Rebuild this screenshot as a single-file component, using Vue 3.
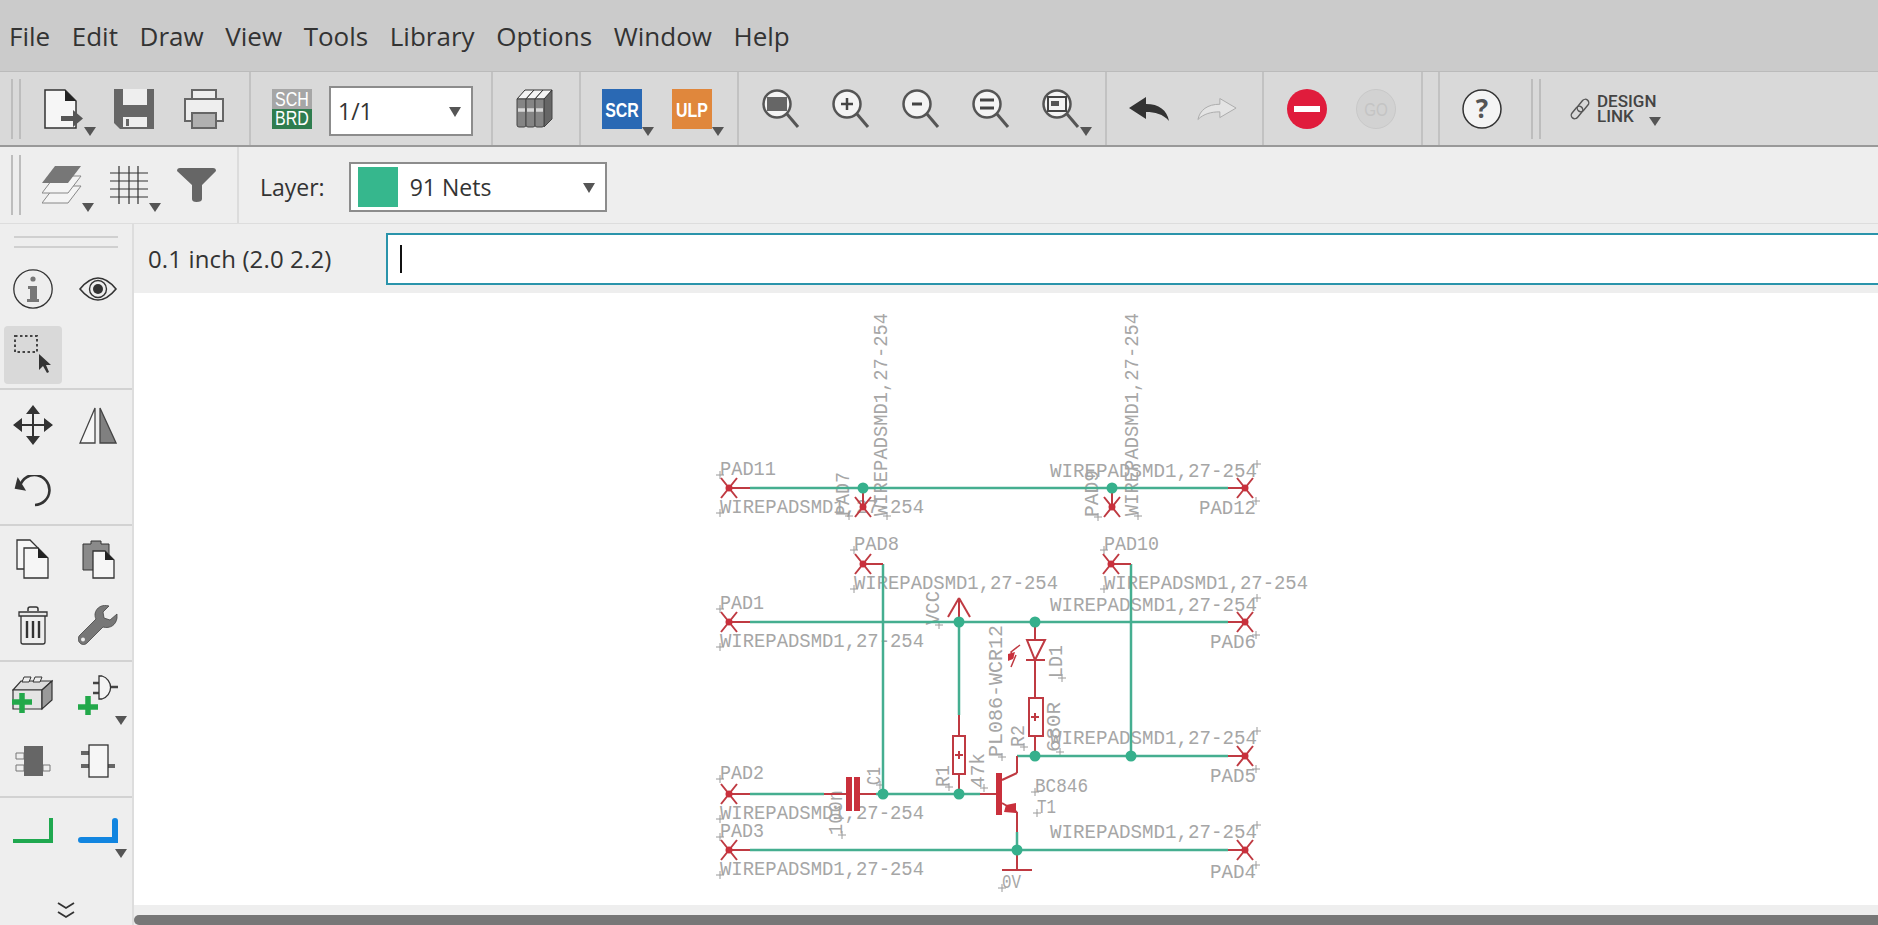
<script setup>
const menus = ['File', 'Edit', 'Draw', 'View', 'Tools', 'Library', 'Options', 'Window', 'Help'];

const wire = 'WIREPADSMD1,27-254';
const labels = [
  { t: 'PAD11', x: 720, y: 475, w: 56 },
  { t: wire, x: 720, y: 513, w: 204 },
  { t: wire, x: 887, y: 516, w: 203, rot: true },
  { t: 'PAD7', x: 849, y: 516, w: 44, rot: true },
  { t: wire, x: 1138, y: 516, w: 203, rot: true },
  { t: 'PAD9', x: 1098, y: 517, w: 47, rot: true },
  { t: wire, x: 1050, y: 477, w: 207, end: true },
  { t: 'PAD12', x: 1199, y: 514, w: 57, end: true },
  { t: 'PAD8', x: 854, y: 550, w: 45 },
  { t: wire, x: 854, y: 589, w: 204 },
  { t: 'PAD10', x: 1104, y: 550, w: 55 },
  { t: wire, x: 1104, y: 589, w: 204 },
  { t: 'PAD1', x: 720, y: 609, w: 44 },
  { t: wire, x: 1050, y: 611, w: 207, end: true },
  { t: wire, x: 720, y: 647, w: 204 },
  { t: 'PAD6', x: 1210, y: 648, w: 46, end: true },
  { t: 'VCC', x: 939, y: 625, w: 34, rot: true },
  { t: 'PL086-WCR12', x: 1002, y: 757, w: 132, rot: true },
  { t: 'LD1', x: 1062, y: 678, w: 33, rot: true },
  { t: 'R2', x: 1024, y: 747, w: 22, rot: true },
  { t: '680R', x: 1060, y: 752, w: 50, rot: true },
  { t: wire, x: 1050, y: 744, w: 207, end: true },
  { t: 'PAD5', x: 1210, y: 782, w: 46, end: true },
  { t: 'R1', x: 949, y: 787, w: 22, rot: true },
  { t: '47k', x: 984, y: 788, w: 35, rot: true },
  { t: 'BC846', x: 1035, y: 792, w: 53 },
  { t: 'T1', x: 1037, y: 813, w: 19 },
  { t: 'PAD2', x: 720, y: 779, w: 44 },
  { t: wire, x: 720, y: 819, w: 204 },
  { t: 'PAD3', x: 720, y: 837, w: 44 },
  { t: '100n', x: 842, y: 835, w: 45, rot: true },
  { t: 'C1', x: 880, y: 785, w: 18, rot: true },
  { t: wire, x: 1050, y: 838, w: 207, end: true },
  { t: 'PAD4', x: 1210, y: 878, w: 46, end: true },
  { t: wire, x: 720, y: 875, w: 204 },
  { t: '0V', x: 1002, y: 888, w: 19 },
];

const crossOf = (l) => (l.end ? { x: l.x + l.w, y: l.y - 13 } : { x: l.x, y: l.y });

const greens = [
  [750, 488, 1228, 488], [750, 622, 1228, 622], [1017, 756, 1228, 756], [750, 794, 824, 794],
  [876, 794, 980, 794], [750, 850, 1228, 850], [883, 564, 883, 794], [1131, 564, 1131, 756],
  [959, 622, 959, 715], [1017, 832, 1017, 850],
];
const reds = [
  [729, 488, 750, 488], [1228, 488, 1245, 488], [863, 488, 863, 507], [1112, 488, 1112, 507],
  [863, 564, 883, 564], [1111, 564, 1131, 564], [729, 622, 750, 622], [1228, 622, 1245, 622],
  [1228, 756, 1245, 756], [729, 794, 750, 794], [729, 850, 750, 850], [1228, 850, 1245, 850],
  [824, 794, 846, 794], [860, 794, 876, 794], [980, 794, 996, 794], [959, 715, 959, 736],
  [959, 774, 959, 794], [1035, 622, 1035, 640], [1035, 660, 1035, 698], [1035, 736, 1035, 756],
  [1017, 756, 1017, 773], [1017, 773, 1002, 780], [1002, 803, 1017, 812], [1017, 812, 1017, 832],
  [1017, 850, 1017, 870], [1002, 870, 1032, 870], [1026, 660, 1045, 660], [959, 622, 959, 598],
  [959, 598, 948, 617], [959, 598, 970, 617], [955, 755, 963, 755], [959, 751, 959, 759],
  [1031, 717, 1039, 717], [1035, 713, 1035, 721],
];
const pads = [
  [729, 488], [1245, 488], [863, 507], [1112, 507], [863, 564], [1111, 564],
  [729, 622], [1245, 622], [1245, 756], [729, 794], [729, 850], [1245, 850],
];
const dots = [
  [863, 488], [1112, 488], [959, 622], [1035, 622], [1035, 756], [1131, 756],
  [883, 794], [959, 794], [1017, 850],
];
</script>

<template>
  <div class="app">
    <nav class="menubar">
      <span v-for="m in menus" :key="m" class="menu">{{ m }}</span>
    </nav>

    <div class="toolbar main-bar">
      <div class="group g0">
        <i class="grip"></i>
        <div class="tool first">
          <svg width="40" height="40" viewBox="0 0 40 40"><path d="M1 1H21L32 12V39H1Z" fill="#f6f6f6" stroke="#333" stroke-width="1.5"/><path d="M21 1L32 12H21Z" fill="#222"/><path d="M17 27H29V21L39 29.5 29 38V32H17Z" fill="#555"/></svg>
          <b class="caret"></b>
        </div>
        <div class="tool">
          <svg width="40" height="40" viewBox="0 0 40 40"><path d="M0 0H40V40H6L0 34Z" fill="#666"/><path d="M9 0H33V16H9Z" fill="#eee"/><path d="M9 28H33V38H9Z" fill="#eee"/><path d="M12 30H15V37H12Z" fill="#666"/></svg>
        </div>
        <div class="tool">
          <svg width="40" height="40" viewBox="0 0 40 40"><rect x="8" y="1" width="24" height="14" fill="#eee" stroke="#666" stroke-width="2"/><rect x="1" y="10" width="38" height="22" fill="#eee" stroke="#666" stroke-width="2"/><rect x="8" y="24" width="24" height="15" fill="#b0b0b0" stroke="#666" stroke-width="2"/></svg>
        </div>
      </div>

      <div class="group g1">
        <div class="tool">
          <svg width="40" height="40" viewBox="0 0 40 40"><rect width="40" height="20" fill="#a6a6a6"/><rect y="20" width="40" height="20" fill="#2f7d4f"/><text transform="translate(20 16.500) scale(.8 1)" text-anchor="middle" class="badge-text">SCH</text><text transform="translate(20 35.800) scale(.8 1)" text-anchor="middle" class="badge-text">BRD</text></svg>
        </div>
        <div class="combo sheet">
          <span>1/1</span>
          <b class="arrow"></b>
        </div>
      </div>

      <div class="group g2">
        <div class="tool">
          <svg width="40" height="40" viewBox="0 0 40 40"><path d="M28 10L36 1V30L28 38Z" fill="#666" stroke="#444"/><g fill="#f4f4f4" stroke="#333" stroke-width="1"><path d="M1 10L9 1H18L10 10Z"/><path d="M10 10L18 1H27L19 10Z"/><path d="M19 10L27 1H36L28 10Z"/></g><g fill="#858585" stroke="#444" stroke-width="1"><path d="M1 10H10V36Q10 38 8 38H3Q1 38 1 36Z"/><path d="M10 10H19V36Q19 38 17 38H12Q10 38 10 36Z"/><path d="M19 10H28V36Q28 38 26 38H21Q19 38 19 36Z"/></g><path d="M2 21H9M11 21H18M20 21H27" stroke="#d8d8d8" stroke-width="3.500"/></svg>
        </div>
      </div>

      <div class="group g3">
        <div class="tool">
          <svg width="40" height="40" viewBox="0 0 40 40"><rect width="40" height="40" fill="#2a69b4"/><text transform="translate(20 28) scale(.76 1)" text-anchor="middle" class="script-text">SCR</text></svg>
          <b class="caret"></b>
        </div>
        <div class="tool">
          <svg width="40" height="40" viewBox="0 0 40 40"><rect width="40" height="40" fill="#e0873c"/><text transform="translate(20 28) scale(.76 1)" text-anchor="middle" class="script-text">ULP</text></svg>
          <b class="caret"></b>
        </div>
      </div>

      <div class="group g4">
        <div class="tool">
          <svg width="40" height="40" viewBox="0 0 40 40"><circle cx="15" cy="15" r="13.500" fill="#f4f4f4" stroke="#555" stroke-width="2.500"/><path d="M25 25L36 38" stroke="#555" stroke-width="3"/><rect x="5" y="8" width="20" height="14" fill="#666"/></svg>
        </div>
        <div class="tool">
          <svg width="40" height="40" viewBox="0 0 40 40"><circle cx="15" cy="15" r="13.500" fill="#f4f4f4" stroke="#555" stroke-width="2.500"/><path d="M25 25L36 38" stroke="#555" stroke-width="3"/><path d="M9 15H21M15 9V21" stroke="#444" stroke-width="2.500"/></svg>
        </div>
        <div class="tool">
          <svg width="40" height="40" viewBox="0 0 40 40"><circle cx="15" cy="15" r="13.500" fill="#f4f4f4" stroke="#555" stroke-width="2.500"/><path d="M25 25L36 38" stroke="#555" stroke-width="3"/><path d="M10 15H20" stroke="#444" stroke-width="3"/></svg>
        </div>
        <div class="tool">
          <svg width="40" height="40" viewBox="0 0 40 40"><circle cx="15" cy="15" r="13.500" fill="#f4f4f4" stroke="#555" stroke-width="2.500"/><path d="M25 25L36 38" stroke="#555" stroke-width="3"/><path d="M8 11H22M8 19H22" stroke="#444" stroke-width="3"/></svg>
        </div>
        <div class="tool">
          <svg width="40" height="40" viewBox="0 0 40 40"><circle cx="15" cy="15" r="13.500" fill="#f4f4f4" stroke="#555" stroke-width="2.500"/><path d="M25 25L36 38" stroke="#555" stroke-width="3"/><rect x="6" y="8" width="18" height="14" fill="none" stroke="#444" stroke-width="2"/><rect x="9" y="12" width="8" height="5" fill="#555"/></svg>
          <b class="caret zoom-caret"></b>
        </div>
      </div>

      <div class="group g5">
        <div class="tool">
          <svg width="40" height="24" viewBox="0 0 40 24"><path d="M0 11L17 0V7C30 7 38 13 40 24 34 17 26 15 17 15V22Z" fill="#333"/></svg>
        </div>
        <div class="tool">
          <svg width="42" height="24" viewBox="0 0 42 24"><path d="M41 11L24 1V7C11 7 3 13 1 23 7 17 15 15 24 15V21Z" fill="#e4e4e4" stroke="#aaa"/></svg>
        </div>
      </div>

      <div class="group g6">
        <div class="tool">
          <svg width="40" height="40" viewBox="0 0 40 40"><circle cx="20" cy="20" r="20" fill="#e01c3c"/><rect x="7" y="17" width="26" height="6" fill="#fff"/></svg>
        </div>
        <div class="tool">
          <svg width="40" height="40" viewBox="0 0 40 40"><circle cx="20" cy="20" r="19.500" fill="#d2d2d2" stroke="#c8c8c8"/><text transform="translate(20 27) scale(.8 1)" text-anchor="middle" class="go-text">GO</text></svg>
        </div>
      </div>

      <div class="group g7"></div>

      <div class="group g8">
        <div class="tool">
          <svg width="40" height="40" viewBox="0 0 40 40"><circle cx="20" cy="20" r="19" fill="#f4f4f4" stroke="#333" stroke-width="1.500"/><text x="20" y="29" text-anchor="middle" class="help-text">?</text></svg>
        </div>
        <i class="grip after-help"></i>
        <div class="design-link">
          <svg width="22" height="22" viewBox="0 0 22 22"><g fill="none" stroke="#555" stroke-width="1.400"><rect x="10.500" y="0.500" width="7" height="14" rx="3.500" transform="rotate(40 14 7.500)"/><rect x="4.500" y="7.500" width="7" height="14" rx="3.500" transform="rotate(40 8 14.500)"/></g></svg>
          <div class="link-text"><span>DESIGN</span><span>LINK</span></div>
          <b class="caret link-caret"></b>
        </div>
      </div>
    </div>

    <div class="toolbar layer-bar">
      <div class="layer-tools">
        <i class="grip"></i>
        <div class="tool first">
          <svg width="40" height="38" viewBox="0 0 40 38"><path d="M13 20H39L26 37H0Z" fill="#f4f4f4" stroke="#888"/><path d="M13 10H39L26 27H0Z" fill="#f4f4f4" stroke="#888"/><path d="M13 0H39L26 17H0Z" fill="#777"/></svg>
          <b class="caret"></b>
        </div>
        <div class="tool">
          <svg width="38" height="38" viewBox="0 0 38 38"><path d="M9 0V38M19 0V38M28 0V38M0 7H38M0 15H38M0 23H38M0 31H38" stroke="#333" stroke-width="1.200"/></svg>
          <b class="caret"></b>
        </div>
        <div class="tool">
          <svg width="39" height="34" viewBox="0 0 39 34"><path d="M0 3Q0 0 3 0H36Q39 0 39 3L25 17V31Q25 34 19.500 34 15 34 15 31V17Z" fill="#666"/></svg>
        </div>
      </div>
      <span class="layer-label">Layer:</span>
      <div class="combo layer-combo">
        <i class="swatch"></i>
        <span>91 Nets</span>
        <b class="arrow"></b>
      </div>
    </div>

    <div class="workspace">
      <aside class="side">
        <section class="side-sec top-sec">
          <i class="side-grip"></i>
          <div class="cells">
            <div class="cell"><svg width="40" height="40" viewBox="0 0 40 40"><circle cx="20" cy="20" r="19.200" fill="none" stroke="#333" stroke-width="1.300"/><circle cx="20" cy="10" r="2.600" fill="#777"/><path d="M15 17H24V30H26V33H14V30H17V20H15Z" fill="#777"/></svg></div>
            <div class="cell"><svg width="38" height="28" viewBox="0 0 38 28"><path d="M1 14Q19 -8 37 14 19 36 1 14Z" fill="none" stroke="#333" stroke-width="1.600"/><circle cx="19" cy="14" r="8.500" fill="none" stroke="#333" stroke-width="1.400"/><circle cx="19" cy="14" r="5" fill="#333"/></svg></div>
            <div class="cell">
              <div class="tile"><svg width="58" height="58" viewBox="0 0 58 58"><rect x="11" y="10" width="22" height="16" fill="none" stroke="#444" stroke-width="2" stroke-dasharray="2.500 2.500"/><path d="M35 28V44L39 40 43 47 45 46 42 39H47Z" fill="#333"/></svg></div>
            </div>
          </div>
        </section>
        <section class="side-sec pad-top">
          <div class="cells">
            <div class="cell"><svg width="40" height="40" viewBox="0 0 40 40"><path d="M20 5V35M5 20H35" stroke="#333" stroke-width="2"/><path d="M20 0L27 9H13ZM20 40L27 31H13ZM0 20L9 13V27ZM40 20L31 13V27Z" fill="#333"/></svg></div>
            <div class="cell"><svg width="38" height="38" viewBox="0 0 38 38"><path d="M16 2V37H1Z" fill="#f6f6f6" stroke="#444" stroke-width="1.300"/><path d="M21 2V37H37Z" fill="#808080" stroke="#444" stroke-width="1.300"/></svg></div>
            <div class="cell"><svg width="37" height="32" viewBox="0 0 37 32"><path d="M6 11A15 15 0 1 1 21 30" fill="none" stroke="#333" stroke-width="2.600"/><path d="M0 13L11 17 5 2Z" fill="#333" transform="rotate(-10 5 10)"/></svg></div>
          </div>
        </section>
        <section class="side-sec pad-bottom">
          <div class="cells">
            <div class="cell"><svg width="33" height="40" viewBox="0 0 33 40"><path d="M1 1H14L22 9V30H1Z" fill="#f6f6f6" stroke="#333" stroke-width="1.300"/><path d="M8 9H22L32 19V39H8Z" fill="#f6f6f6" stroke="#333" stroke-width="1.300"/><path d="M22 9L32 19H22Z" fill="#222"/></svg></div>
            <div class="cell"><svg width="33" height="40" viewBox="0 0 33 40"><path d="M1 5H9V2H19V5H27V31H1Z" fill="#8a8a8a" stroke="#333" stroke-width="1"/><path d="M11 12H23L32 21V39H11Z" fill="#f6f6f6" stroke="#333" stroke-width="1.300"/><path d="M23 12L32 21H23Z" fill="#222"/></svg></div>
            <div class="cell"><svg width="30" height="39" viewBox="0 0 30 39"><path d="M10 5V3Q10 1 12 1H18Q20 1 20 3V5" fill="none" stroke="#333" stroke-width="1.500"/><path d="M1 6H29V10H1Z" fill="#e8e8e8" stroke="#333" stroke-width="1.300"/><path d="M3 10V36Q3 38 5 38H25Q27 38 27 36V10" fill="none" stroke="#333" stroke-width="1.300"/><path d="M9 15V32M15 15V32M21 15V32" stroke="#333" stroke-width="2.400"/></svg></div>
            <div class="cell"><svg width="40" height="40" viewBox="0 0 40 40"><path d="M39 9L32 15 26 13 25 7 31 1C25 -1 18 2 17 9 17 11 17 12 18 14L2 30C-1 33 0 36 2 38 4 40 7 40 9 38L25 22C32 24 38 20 39 13Z" fill="#777" stroke="#444" stroke-width=".8"/><circle cx="5" cy="34.500" r="2" fill="#eee"/></svg></div>
          </div>
        </section>
        <section class="side-sec pad-bottom">
          <div class="cells">
            <div class="cell"><svg width="41" height="38" viewBox="0 0 41 38"><path d="M1 14L9 5H40L30 14Z" fill="#dcdcdc" stroke="#333" stroke-width="1.200"/><path d="M1 14H30V33H1Z" fill="#e4e4e4" stroke="#333" stroke-width="1.200"/><path d="M30 14L40 5V24L30 33Z" fill="#9a9a9a" stroke="#333" stroke-width="1.200"/><path d="M10 6L12 1H19L17 6ZM21 6L23 1H30L28 6Z" fill="#eee" stroke="#333"/><path d="M0 26H20M10 17V37" stroke="#22a84a" stroke-width="5.500"/></svg></div>
            <div class="cell cell-shift"><svg width="40" height="40" viewBox="0 0 40 40"><path d="M15 8H21M15 18H21M32 12H40" stroke="#444" stroke-width="2.400"/><path d="M21 1H24A12 12 0 0 1 24 24H21Z" fill="#f4f4f4" stroke="#333" stroke-width="1.300"/><path d="M0 32H20M10 21V40" stroke="#22a84a" stroke-width="5.500"/></svg><b class="caret side-caret"></b></div>
            <div class="cell"><svg width="36" height="32" viewBox="0 0 36 32"><path d="M1 8H9V14H1ZM1 20H9V26H1ZM28 20H35V26H28Z" fill="#eee" stroke="#777"/><rect x="9" y="1" width="19" height="30" fill="#666"/></svg></div>
            <div class="cell"><svg width="34" height="34" viewBox="0 0 34 34"><path d="M0 9H8M0 22H8M27 22H34" stroke="#666" stroke-width="4"/><rect x="8" y="1" width="19" height="32" fill="#f6f6f6" stroke="#333" stroke-width="1.300"/></svg></div>
          </div>
        </section>
        <section class="side-sec wires">
          <div class="cells">
            <div class="cell"><svg width="40" height="26" viewBox="0 0 40 26"><path d="M0 23H38V0" fill="none" stroke="#1fa84f" stroke-width="4"/></svg></div>
            <div class="cell cell-shift"><svg width="40" height="26" viewBox="0 0 40 26"><path d="M3 22H37V3" fill="none" stroke="#1185e0" stroke-width="6" stroke-linecap="round"/></svg><b class="caret side-caret wire-caret"></b></div>
          </div>
        </section>
        <div class="more"><svg width="18" height="17" viewBox="0 0 18 17"><path d="M1 1L9 6 17 1M1 10L9 15 17 10" fill="none" stroke="#333" stroke-width="1.800"/></svg></div>
      </aside>

      <div class="editor">
        <div class="command">
          <span class="hint">0.1 inch (2.0 2.2)</span>
          <div class="cmd-input"><i class="text-caret"></i></div>
        </div>
        <div class="canvas">
          <svg class="schematic" viewBox="134 293 1744 612" width="1744" height="612">
            <g v-for="(l, i) in labels" :key="i">
              <text
                class="sch-text"
                :x="l.x"
                :y="l.y"
                :textLength="l.w"
                lengthAdjust="spacingAndGlyphs"
                :transform="l.rot ? `rotate(-90 ${l.x} ${l.y})` : null"
              >{{ l.t }}</text>
              <path
                :d="`M${crossOf(l).x - 4} ${crossOf(l).y}h8M${crossOf(l).x} ${crossOf(l).y - 4}v8`"
                stroke="#9a9a9a"
                stroke-width="1"
              />
            </g>
            <line v-for="(w, i) in greens" :key="'g' + i" :x1="w[0]" :y1="w[1]" :x2="w[2]" :y2="w[3]" class="net" />
            <line v-for="(w, i) in reds" :key="'r' + i" :x1="w[0]" :y1="w[1]" :x2="w[2]" :y2="w[3]" class="sym" />
            <g v-for="(p, i) in pads" :key="'p' + i">
              <path
                :d="`M${p[0] - 8} ${p[1] - 10}L${p[0] + 8} ${p[1] + 10}M${p[0] + 8} ${p[1] - 10}L${p[0] - 8} ${p[1] + 10}`"
                class="sym"
              />
              <circle :cx="p[0]" :cy="p[1]" r="3.500" class="fill" />
            </g>
            <circle v-for="(d, i) in dots" :key="'d' + i" :cx="d[0]" :cy="d[1]" r="5.500" class="dot" />
            <rect x="953" y="736" width="12" height="38" class="body" />
            <rect x="1029" y="698" width="14" height="38" class="body" />
            <path d="M1027 640H1045L1035 660Z" class="body" />
            <path d="M1027 640H1045" class="sym" />
            <rect x="846" y="777" width="6" height="34" class="fill" />
            <rect x="854" y="777" width="6" height="34" class="fill" />
            <rect x="996" y="773" width="6" height="42" class="fill" />
            <path d="M1006 805L1016 803 1016 813 1004 812Z" class="fill" />
            <path d="M1020 645L1011 652 1013 658M1016 655L1011 667" class="led" />
            <path d="M1008 654L1015 652 1013 659 1008 661Z" class="fill" />
          </svg>
        </div>
        <div class="scroll-gap"></div>
        <div class="scrollbar"></div>
      </div>
    </div>
  </div>
</template>

<style>
html,
body {
  margin: 0;
  overflow: hidden;
}
</style>

<style scoped>
.app {
  width: 1878px;
  height: 925px;
  display: flex;
  flex-direction: column;
  overflow: hidden;
  font-family: 'Open Sans', sans-serif;
  color: #333;
  background: #eee;
}

.menubar {
  height: 71px;
  flex: none;
  display: flex;
  align-items: center;
  gap: 21.600px;
  padding: 0 0 0 9px;
  background: #cbcbcb;
  border-bottom: 1px solid #bbb;
  font-size: 26px;
}

.toolbar {
  flex: none;
  display: flex;
  align-items: center;
}

.main-bar {
  height: 75px;
  box-sizing: border-box;
  background: #d9d9d9;
  border-bottom: 2px solid #999;
}

.group {
  height: 100%;
  flex: none;
  display: flex;
  align-items: center;
  box-sizing: border-box;
  border-right: 2px solid #c2c2c2;
}

.g0 { padding: 0 25px 0 11px; gap: 30px; }
.g1 { padding: 0 18px 0 21px; gap: 17px; }
.g2 { padding: 0 23px; }
.g3 { padding: 0 25px 0 21px; gap: 30px; }
.g4 { padding: 0 23px; gap: 30px; }
.g5 { padding: 0 25px 0 22px; gap: 28px; }
.g6 { padding: 0 25px 0 23px; gap: 29px; }
.g7 { width: 17px; }
.g8 { border-right: 0; padding-left: 22px; }

.grip {
  display: block;
  flex: none;
  width: 10px;
  height: 60px;
  box-sizing: border-box;
  border-left: 2px solid #bdbdbd;
  border-right: 2px solid #bdbdbd;
}

.tool {
  position: relative;
  flex: none;
  width: 40px;
  height: 40px;
  display: flex;
  align-items: center;
  justify-content: center;
}

.tool svg,
.cell svg,
.tile svg,
.more svg,
.design-link svg {
  display: block;
}

.g0 .first { margin-left: -7px; }

.caret {
  position: absolute;
  right: -12px;
  bottom: -7px;
  width: 0;
  height: 0;
  border-left: 6px solid transparent;
  border-right: 6px solid transparent;
  border-top: 9px solid #555;
}

.zoom-caret { right: -10px; }

.badge-text {
  font-family: 'Liberation Sans', sans-serif;
  font-size: 20px;
  fill: #fff;
}

.script-text {
  font-family: 'Liberation Sans', sans-serif;
  font-size: 21px;
  font-weight: 700;
  fill: #fff;
}

.go-text {
  font-family: 'Liberation Sans', sans-serif;
  font-size: 19px;
  fill: #c4c4c4;
}

.help-text {
  font-family: 'Open Sans', sans-serif;
  font-size: 26px;
  font-weight: 700;
  fill: #555;
}

.combo {
  position: relative;
  flex: none;
  display: flex;
  align-items: center;
  box-sizing: border-box;
  background: #fff;
  border: 2px solid #8c8c8c;
}

.sheet {
  width: 144px;
  height: 50px;
  margin-top: 5px;
  padding-left: 7px;
  font-size: 23px;
}

.arrow {
  position: absolute;
  right: 10px;
  top: 19px;
  width: 0;
  height: 0;
  border-left: 6px solid transparent;
  border-right: 6px solid transparent;
  border-top: 10px solid #555;
}

.after-help { margin-left: 29px; }

.design-link {
  position: relative;
  display: flex;
  align-items: center;
  gap: 6px;
  margin-left: 28px;
}

.link-text {
  display: flex;
  flex-direction: column;
  font-family: Roboto, sans-serif;
  font-weight: 500;
  font-size: 17px;
  line-height: 15px;
  color: #444;
}

.link-caret {
  right: -5px;
  bottom: -2px;
}

.layer-bar {
  height: 77px;
  background: #eee;
  border-bottom: 1px solid #ddd;
  box-sizing: border-box;
}

.layer-tools {
  height: 100%;
  flex: none;
  width: 239px;
  box-sizing: border-box;
  display: flex;
  align-items: center;
  gap: 27px;
  padding-left: 11px;
  border-right: 2px solid #dcdcdc;
}

.layer-tools .first { margin-left: -6px; }

.layer-label {
  margin: 4px 24px 0 21px;
  font-size: 23px;
}

.layer-combo {
  width: 258px;
  height: 50px;
  margin-top: 4px;
  padding-left: 7px;
  font-size: 23px;
}

.swatch {
  display: block;
  width: 40px;
  height: 40px;
  margin-right: 12px;
  background: #36b78d;
}

.workspace {
  flex: 1;
  min-height: 0;
  display: flex;
}

.side {
  flex: none;
  width: 134px;
  box-sizing: border-box;
  display: flex;
  flex-direction: column;
  background: #eee;
  border-right: 2px solid #ddd;
}

.side-sec {
  flex: none;
  border-bottom: 2px solid #d2d2d2;
}

.top-sec { padding-top: 12px; }
.pad-top { padding-top: 2px; }
.pad-bottom { padding-bottom: 2px; }
.wires { border-bottom: 0; }

.side-grip {
  display: block;
  height: 12px;
  box-sizing: border-box;
  margin: 0 14px 8px;
  border-top: 2px solid #d0d0d0;
  border-bottom: 2px solid #d0d0d0;
}

.cells {
  display: grid;
  grid-template-columns: 65px 66px;
  grid-auto-rows: 66px;
}

.cell {
  position: relative;
  display: flex;
  align-items: center;
  justify-content: center;
}

.tile {
  width: 58px;
  height: 58px;
  border-radius: 4px;
  background: #d9d9d9;
}

.side-caret {
  right: 4px;
  bottom: 3px;
}

.wire-caret { bottom: 6px; }

.more {
  margin-top: auto;
  padding-bottom: 6px;
  display: flex;
  justify-content: center;
}

.editor {
  flex: 1;
  min-width: 0;
  display: flex;
  flex-direction: column;
}

.command {
  height: 69px;
  flex: none;
  display: flex;
  align-items: center;
  padding-left: 14px;
  background: #eee;
}

.hint {
  width: 238px;
  flex: none;
  font-size: 24px;
  letter-spacing: 0.130px;
}

.cmd-input {
  flex: 1;
  height: 52px;
  box-sizing: border-box;
  margin-right: -4px;
  display: flex;
  align-items: center;
  padding-left: 12px;
  background: #fff;
  border: 2px solid #2a94ab;
}

.text-caret {
  display: block;
  width: 2px;
  height: 28px;
  background: #111;
}

.canvas {
  flex: 1;
  min-height: 0;
  background: #fff;
  overflow: hidden;
}

.schematic {
  display: block;
}

.sch-text {
  font-family: 'Liberation Mono', monospace;
  font-size: 20px;
  fill: #a6a6a6;
}

.net {
  stroke: #45ae90;
  stroke-width: 2.500;
}

.sym {
  stroke: #bf3a42;
  stroke-width: 2;
  fill: none;
}

.dot {
  fill: #36b08c;
}

.body {
  fill: none;
  stroke: #bf3a42;
  stroke-width: 2;
}

.fill {
  fill: #c9303c;
}

.led {
  fill: none;
  stroke: #bf3a42;
  stroke-width: 1.500;
}

.scroll-gap {
  height: 10px;
  flex: none;
  background: #eee;
}

.scrollbar {
  height: 10px;
  flex: none;
  background: #777;
  border-radius: 5px 0 0 5px;
}
</style>
